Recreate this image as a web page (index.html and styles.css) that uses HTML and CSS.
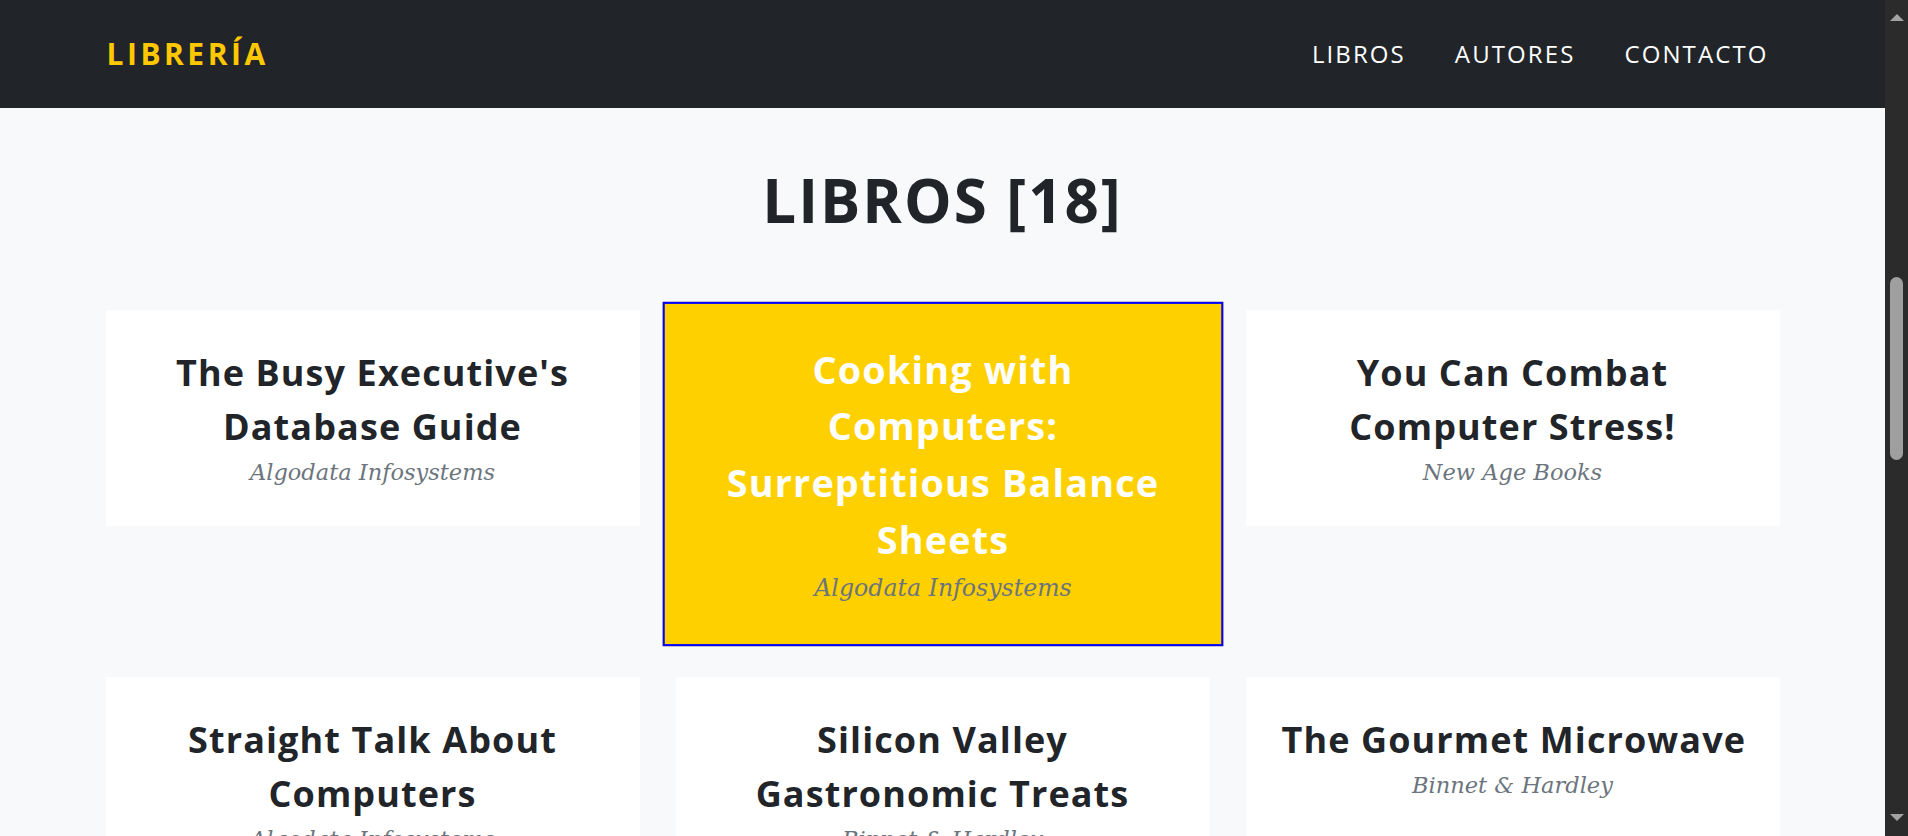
FILE: index.html
```html
<!DOCTYPE html>
<html lang="es">
<head>
<meta charset="utf-8">
<title>Librería</title>
<link rel="stylesheet" href="styles.css">
</head>
<body>
<div class="viewport">
  <header class="navbar">
    <div class="container nav-inner">
      <a class="brand" href="#">LIBRERÍA</a>
      <nav class="nav">
        <a href="#">LIBROS</a>
        <a href="#">AUTORES</a>
        <a href="#">CONTACTO</a>
      </nav>
    </div>
  </header>
  <main class="section">
    <div class="container">
      <h2 class="section-heading">LIBROS [18]</h2>
      <div class="grid">
        <div class="card">
          <h3 class="card-title">The Busy Executive's<br>Database Guide</h3>
          <p class="card-sub">Algodata Infosystems</p>
        </div>
        <div class="card card-active">
          <h3 class="card-title">Cooking with<br>Computers:<br>Surreptitious Balance<br>Sheets</h3>
          <p class="card-sub">Algodata Infosystems</p>
        </div>
        <div class="card">
          <h3 class="card-title">You Can Combat<br>Computer Stress!</h3>
          <p class="card-sub">New Age Books</p>
        </div>
        <div class="card">
          <h3 class="card-title">Straight Talk About<br>Computers</h3>
          <p class="card-sub">Algodata Infosystems</p>
        </div>
        <div class="card">
          <h3 class="card-title">Silicon Valley<br>Gastronomic Treats</h3>
          <p class="card-sub">Binnet &amp; Hardley</p>
        </div>
        <div class="card">
          <h3 class="card-title">The Gourmet Microwave</h3>
          <p class="card-sub">Binnet &amp; Hardley</p>
        </div>
      </div>
    </div>
  </main>
</div>
<div class="scrollbar">
  <span class="arrow arrow-up"></span>
  <div class="thumb"></div>
  <div class="spacer"></div>
  <span class="arrow arrow-down"></span>
</div>
</body>
</html>
```
FILE: styles.css
```css
html, body {
  margin: 0;
  padding: 0;
}
body {
  display: flex;
  height: 836px;
  overflow: hidden;
  background: #f8f9fa;
  font-family: "Open Sans", sans-serif;
}
.viewport {
  flex: 1;
  min-width: 0;
  height: 836px;
  overflow: hidden;
  background: #f8f9fa;
}
.container {
  width: 1674px;
  margin: 0 auto;
}
.navbar {
  background: #212529;
  height: 108px;
}
.nav-inner {
  height: 100%;
  display: flex;
  align-items: center;
  justify-content: space-between;
}
.brand {
  font-family: "Open Sans", sans-serif;
  font-weight: 700;
  font-size: 30px;
  line-height: 1;
  letter-spacing: 3.5px;
  color: #ffc800;
  text-decoration: none;
  margin-left: 1px;
}
.nav {
  display: flex;
  gap: 49px;
  margin-right: 11px;
}
.nav a {
  font-family: "Open Sans", sans-serif;
  font-weight: 400;
  font-size: 24px;
  line-height: 1;
  letter-spacing: 2.1px;
  color: #ffffff;
  text-decoration: none;
}
.section {
  padding-top: 56px;
}
.section-heading {
  margin: 0 0 74px;
  text-align: center;
  font-family: "Open Sans", sans-serif;
  font-weight: 700;
  font-size: 60px;
  line-height: 72px;
  letter-spacing: 2px;
  color: #212529;
}
.grid {
  display: grid;
  grid-template-columns: repeat(3, minmax(0, 1fr));
  column-gap: 36px;
  row-gap: 39px;
  align-items: start;
}
.card {
  box-sizing: border-box;
  background: #ffffff;
  padding: 36px;
  text-align: center;
  min-width: 0;
}
.card-title {
  margin: 0;
  font-family: "Open Sans", sans-serif;
  font-weight: 700;
  font-size: 36px;
  line-height: 54px;
  letter-spacing: 1.1px;
  white-space: nowrap;
  color: #212529;
}
.card-sub {
  margin: 0;
  font-family: "DejaVu Serif", serif;
  font-style: italic;
  font-size: 22.5px;
  line-height: 36px;
  color: #6c757d;
}
.card-active {
  background: #ffd000;
  border: 2px solid #0000ff;
  transform: scale(1.05);
}
.card-active .card-title {
  color: #ffffff;
}
.scrollbar {
  width: 23px;
  height: 836px;
  background: #2b2b2b;
  display: flex;
  flex-direction: column;
  align-items: center;
}
.arrow {
  width: 0;
  height: 0;
  border-left: 7px solid transparent;
  border-right: 7px solid transparent;
}
.arrow-up {
  margin-top: 14px;
  border-bottom: 7px solid #a3a3a3;
}
.arrow-down {
  margin-bottom: 15px;
  border-top: 7px solid #a3a3a3;
}
.thumb {
  width: 13px;
  height: 183px;
  margin-top: 256px;
  border-radius: 7px;
  background: #9f9f9f;
}
.spacer {
  flex: 1;
}
```
